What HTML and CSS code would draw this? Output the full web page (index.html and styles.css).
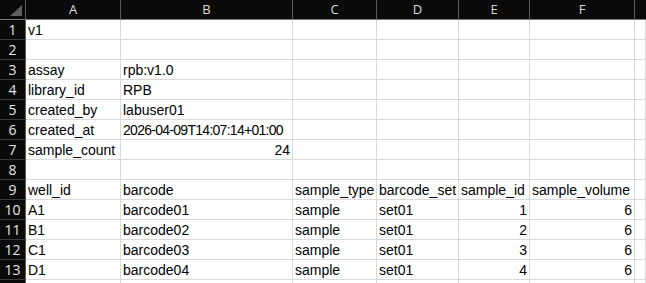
FILE: index.html
```html
<!DOCTYPE html>
<html>
<head>
<meta charset="utf-8">
<link rel="stylesheet" href="styles.css">
</head>
<body>
<div class="sheet">
  <div class="corner"><span class="tri"></span></div>
  <div class="ch">A</div><div class="ch">B</div><div class="ch">C</div><div class="ch">D</div><div class="ch">E</div><div class="ch">F</div><div class="ch last"></div>

  <div class="rh">1</div><div class="c">v1</div><div class="c"></div><div class="c"></div><div class="c"></div><div class="c"></div><div class="c"></div><div class="c"></div>
  <div class="rh">2</div><div class="c"></div><div class="c"></div><div class="c"></div><div class="c"></div><div class="c"></div><div class="c"></div><div class="c"></div>
  <div class="rh">3</div><div class="c">assay</div><div class="c">rpb:v1.0</div><div class="c"></div><div class="c"></div><div class="c"></div><div class="c"></div><div class="c"></div>
  <div class="rh">4</div><div class="c">library_id</div><div class="c">RPB</div><div class="c"></div><div class="c"></div><div class="c"></div><div class="c"></div><div class="c"></div>
  <div class="rh">5</div><div class="c">created_by</div><div class="c">labuser01</div><div class="c"></div><div class="c"></div><div class="c"></div><div class="c"></div><div class="c"></div>
  <div class="rh">6</div><div class="c">created_at</div><div class="c date">2026-04-09T14:07:14+01:00</div><div class="c"></div><div class="c"></div><div class="c"></div><div class="c"></div><div class="c"></div>
  <div class="rh">7</div><div class="c">sample_count</div><div class="c num">24</div><div class="c"></div><div class="c"></div><div class="c"></div><div class="c"></div><div class="c"></div>
  <div class="rh">8</div><div class="c"></div><div class="c"></div><div class="c"></div><div class="c"></div><div class="c"></div><div class="c"></div><div class="c"></div>
  <div class="rh">9</div><div class="c">well_id</div><div class="c">barcode</div><div class="c">sample_type</div><div class="c">barcode_set</div><div class="c">sample_id</div><div class="c">sample_volume</div><div class="c"></div>
  <div class="rh">10</div><div class="c">A1</div><div class="c">barcode01</div><div class="c">sample</div><div class="c">set01</div><div class="c num">1</div><div class="c num">6</div><div class="c"></div>
  <div class="rh">11</div><div class="c">B1</div><div class="c">barcode02</div><div class="c">sample</div><div class="c">set01</div><div class="c num">2</div><div class="c num">6</div><div class="c"></div>
  <div class="rh">12</div><div class="c">C1</div><div class="c">barcode03</div><div class="c">sample</div><div class="c">set01</div><div class="c num">3</div><div class="c num">6</div><div class="c"></div>
  <div class="rh">13</div><div class="c">D1</div><div class="c">barcode04</div><div class="c">sample</div><div class="c">set01</div><div class="c num">4</div><div class="c num">6</div><div class="c"></div>
  <div class="rh"></div><div class="c"></div><div class="c"></div><div class="c"></div><div class="c"></div><div class="c"></div><div class="c"></div><div class="c"></div>
</div>
</body>
</html>
```
FILE: styles.css
```css
html, body {
  margin: 0;
  padding: 0;
  background: #ffffff;
  overflow: hidden;
}
.sheet {
  display: grid;
  grid-template-columns: 26px 95px 172px 84px 82px 71px 105px 11px;
  grid-auto-rows: 20px;
  width: 646px;
  height: 283px;
  overflow: hidden;
  font-family: "Liberation Sans", Arial, sans-serif;
  font-size: 14px;
  color: #000000;
}
.corner {
  background: #0a0a0a;
  border-right: 1px solid #5a5a5a;
  border-bottom: 1px solid #7a7a7a;
  box-sizing: border-box;
  position: relative;
}
.tri {
  position: absolute;
  right: 3px;
  bottom: 3px;
  width: 0;
  height: 0;
  border-left: 12px solid transparent;
  border-bottom: 11px solid #5f5f5f;
}
.ch {
  background: #0a0a0a;
  color: #dcdcdc;
  font-family: "Open Sans", "Liberation Sans", sans-serif;
  font-size: 13px;
  box-sizing: border-box;
  border-right: 1px solid #5a5a5a;
  border-bottom: 1px solid #7a7a7a;
  display: flex;
  align-items: center;
  justify-content: center;
  line-height: 19px;
}
.ch.last {
  border-right: none;
}
.rh {
  background: #0a0a0a;
  color: #e6e6e6;
  font-family: "Open Sans", "Liberation Sans", sans-serif;
  font-size: 14px;
  box-sizing: border-box;
  border-right: 1px solid #5a5a5a;
  border-bottom: 1px solid #3a3a3a;
  display: flex;
  align-items: center;
  justify-content: center;
  line-height: 19px;
}
.c {
  box-sizing: border-box;
  border-right: 1px solid #dadada;
  border-bottom: 1px solid #dadada;
  padding: 0 2px;
  line-height: 20px;
  white-space: nowrap;
  overflow: visible;
}
.num {
  text-align: right;
}
.date {
  letter-spacing: -0.72px;
}
```
